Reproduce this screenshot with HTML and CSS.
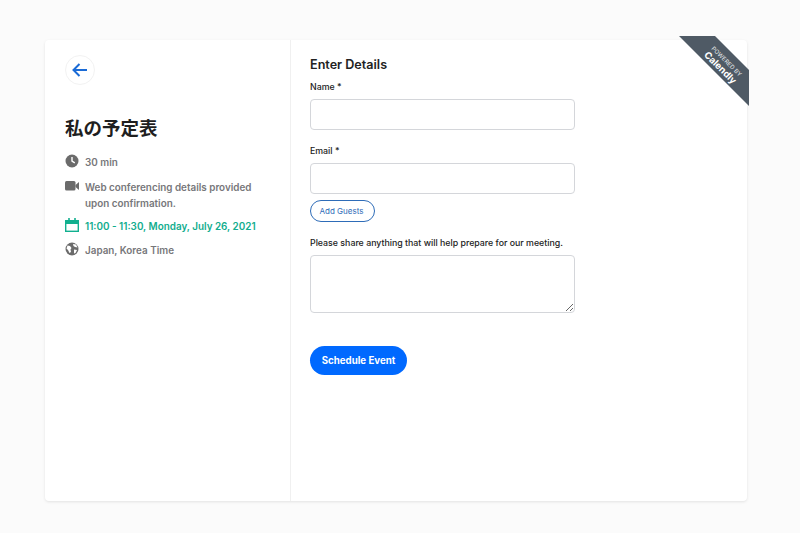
FILE: index.html
```html
<!DOCTYPE html>
<html lang="en">
<head>
<meta charset="utf-8">
<title>Enter Details</title>
<link rel="stylesheet" href="styles.css">
</head>
<body>
<main class="card">
  <aside class="side">
    <div class="back">
      <svg width="16" height="14" viewBox="0 0 16 14"><path d="M15 7H2M7.500 1 1.500 7l6 6" fill="none" stroke="#1a6bd6" stroke-width="2"/></svg>
    </div>
    <h1 class="title">私の予定表</h1>
    <ul class="facts">
      <li class="fact fact-time">
        <svg class="ic" width="14" height="14" viewBox="0 0 14 14"><circle cx="7" cy="7" r="6.500" fill="#6b6b6b"/><path d="M7 3v4.200l2.800 1.600" fill="none" stroke="#fff" stroke-width="1.400"/></svg>
        <span>30 min</span>
      </li>
      <li class="fact fact-web">
        <svg class="ic" width="14" height="14" viewBox="0 0 14 14"><rect x="0" y="2" width="10.500" height="9.500" rx="1.500" fill="#6b6b6b"/><path d="M10.500 6 14 3v8l-3.500-3z" fill="#6b6b6b"/></svg>
        <span>Web conferencing details provided upon confirmation.</span>
      </li>
      <li class="fact fact-green">
        <svg class="ic" width="14" height="14" viewBox="0 0 14 14"><rect x=".7" y="2.700" width="12.600" height="10.600" fill="none" stroke="#11b08f" stroke-width="1.400"/><rect x="1" y="3" width="12" height="3" fill="#11b08f"/><path d="M4 0v3M10 0v3" stroke="#11b08f" stroke-width="1.600"/></svg>
        <span>11:00 - 11:30, Monday, July 26, 2021</span>
      </li>
      <li class="fact">
        <svg class="ic" width="14" height="14" viewBox="0 0 14 14"><circle cx="7" cy="7" r="6.500" fill="#6b6b6b"/><path d="M2.500 3.500 5 4l1.500 2-1 1.500L6 10l-1.500 1L3 8 1.500 6.500zM8 2l3 .5 1.500 3L10 5 8.500 4zM9 7.500l3 .5-1.500 3L9 11.500z" fill="#fff"/></svg>
        <span>Japan, Korea Time</span>
      </li>
    </ul>
  </aside>
  <section class="form-pane">
    <h2 class="heading">Enter Details</h2>
    <form class="form">
      <div class="field field-name">
        <label class="label">Name *</label>
        <input class="input" type="text">
      </div>
      <div class="field field-email">
        <label class="label">Email *</label>
        <input class="input" type="text">
      </div>
      <button class="guests" type="button">Add Guests</button>
      <div class="field field-note">
        <label class="label">Please share anything that will help prepare for our meeting.</label>
        <textarea class="area"></textarea>
      </div>
      <button class="submit" type="button">Schedule Event</button>
    </form>
  </section>
  <div class="ribbon">
    <div class="ribbon-text"><span class="ribbon-small">POWERED BY</span><span class="ribbon-big">Calendly</span></div>
  </div>
</main>
</body>
</html>
```
FILE: styles.css
```css
* { box-sizing: border-box; }
html, body { margin: 0; height: 100%; }
body {
  background: #fbfbfb;
  padding: 40px 53px 32px 45px;
  font-family: Inter, "Noto Sans CJK JP", sans-serif;
  color: #1a1a1a;
}
.card {
  position: relative;
  display: flex;
  width: 702px;
  height: 461px;
  background: #fff;
  border-radius: 4px;
  box-shadow: 0 1px 3px rgba(0, 0, 0, .1);
}
.side {
  width: 246px;
  padding: 15px 20px;
  border-right: 1px solid #f0f0f0;
  flex: none;
}
.back {
  width: 30px;
  height: 30px;
  border: 1px solid #f2f2f2;
  border-radius: 50%;
  display: flex;
  align-items: center;
  justify-content: center;
}
.title {
  margin: 30px 0 0;
  font: 700 18.500px/24px "Noto Sans CJK JP", sans-serif;
  color: #1f1f1f;
}
.facts {
  list-style: none;
  margin: 15px 0 0;
  padding: 0;
}
.fact {
  display: flex;
  gap: 6px;
  font-size: 9.900px;
  font-weight: 600;
  line-height: 16px;
  color: #77777a;
  margin-bottom: 8px;
}
.fact-time { margin-bottom: 9px; }
.fact-web { margin-bottom: 7px; }
.fact-green { color: #12ad8e; }
.ic { flex: none; }
.form-pane {
  flex: 1;
  padding: 16px 19px;
}
.heading {
  margin: 0;
  font-size: 12.600px;
  line-height: 18px;
  font-weight: 600;
  color: #222;
}
.form { display: flex; flex-direction: column; align-items: flex-start; }
.field { width: 265px; }
.label {
  display: block;
  font-size: 8.800px;
  line-height: 12px;
  font-weight: 500;
  color: #222;
}
.field-name { margin-top: 7px; }
.field-email { margin-top: 15px; }
.field-note { margin-top: 15px; }
.input, .area {
  display: block;
  width: 265px;
  margin-top: 6px;
  border: 1px solid #d4d6da;
  border-radius: 4px;
  background: #fff;
}
.input { height: 31px; }
.area { height: 58px; }
.guests {
  margin-top: 6px;
  width: 65px;
  height: 22px;
  padding: 0 2px 0 0;
  border: 1px solid #2e6cb8;
  border-radius: 11px;
  background: #fff;
  font: 400 8px Inter, sans-serif;
  color: #2e6cb8;
}
.submit {
  margin-top: 33px;
  width: 97px;
  height: 29px;
  padding: 0;
  border: 0;
  border-radius: 15px;
  background: #0069ff;
  color: #fff;
  font: 700 9.700px Inter, sans-serif;
}
.ribbon {
  position: absolute;
  top: -4px;
  right: -2px;
  width: 70px;
  height: 70px;
  background: #4f5a65;
  clip-path: polygon(0 0, 36px 0, 70px 34px, 70px 70px);
}
.ribbon-text {
  position: absolute;
  left: 14px;
  top: 20px;
  width: 60px;
  transform: rotate(45deg);
  display: flex;
  flex-direction: column;
  align-items: center;
  color: #fff;
}
.ribbon-small { font-size: 6px; line-height: 8px; font-weight: 500; color: #d8dbde; }
.ribbon-big { font-size: 9.500px; line-height: 10px; font-weight: 700; }
```
